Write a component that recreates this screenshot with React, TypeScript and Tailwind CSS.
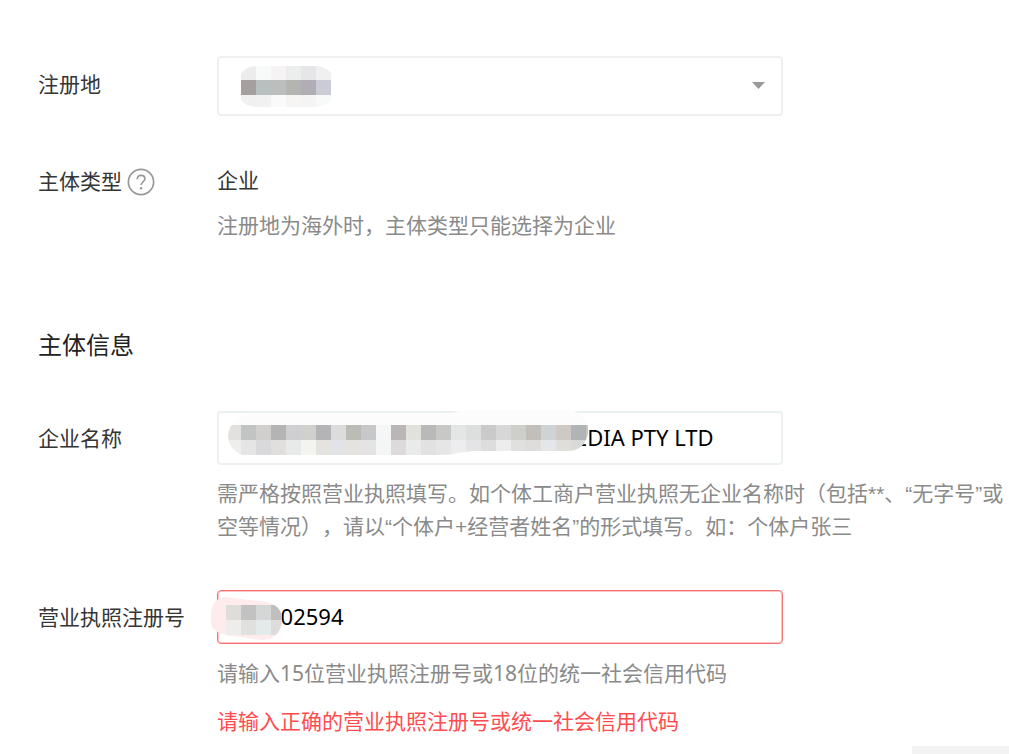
import { useState, type ReactNode } from "react";

type Row = { y: number; h: number; colors: string[] };

function Tiles({ x, rows, first = 15 }: { x: number; rows: Row[]; first?: number }) {
  return (
    <>
      {rows.map((row) =>
        row.colors.map((color, i) => (
          <rect
            key={`${row.y}-${i}`}
            x={i === 0 ? x : x + first + (i - 1) * 15}
            y={row.y}
            width={i === 0 ? first : 15}
            height={row.h}
            fill={color}
            shapeRendering="crispEdges"
          />
        )),
      )}
    </>
  );
}

function RegionMask() {
  return (
    <svg className="pointer-events-none absolute top-[10px] left-6" width="90" height="41" viewBox="0 0 90 41" aria-hidden="true">
      <clipPath id="region-mask">
        <path d="M0 8Q5 0 18 0H75Q86 1 90 7V34Q85 41 74 41H18Q5 41 0 34Z" />
      </clipPath>
      <g clipPath="url(#region-mask)">
        <Tiles
          x={0}
          rows={[
            { y: 0, h: 14, colors: ["#ececec", "#f8f9f9", "#f5f3f4", "#eceded", "#e6e6e8", "#f0f0f0"] },
            { y: 14, h: 15, colors: ["#a59fa0", "#b8bfbf", "#bcbdbd", "#b4b4b0", "#b0adb4", "#cbcbd5"] },
            { y: 29, h: 12, colors: ["#f0f0f0", "#f1f1f1", "#fafafa", "#f6f5f4", "#f4f4f4", "#f8fafa"] },
          ]}
        />
      </g>
    </svg>
  );
}

function NameMask() {
  return (
    <svg className="pointer-events-none absolute -top-px left-[11px]" width="360" height="46" viewBox="0 0 360 46" aria-hidden="true">
      <clipPath id="name-mask">
        <path d="M22 5H205Q222 4 236 0H340Q353 1 360 15V24Q356 40 341 41H246Q233 42 226 44Q219 45 210 45H14Q0 38 0 26Q1 9 22 5Z" />
      </clipPath>
      <g clipPath="url(#name-mask)">
        <rect width="360" height="46" fill="#fcfcfc" />
        <Tiles
          x={0}
          first={13}
          rows={[
            {
              y: 15,
              h: 15,
              colors: [
                "#e2e1e0", "#c2c4c3", "#d0cfcd", "#b4b4b4", "#cfcfd2", "#d0d0cc", "#b4b4b6", "#dcdcdd",
                "#bbbcb5", "#c8c8cb", "#f5f6f6", "#bab6b8", "#e1e2dc", "#b9b9b9", "#c8c8c6", "#e3e6e5",
                "#dcdfdd", "#cacaca", "#d7d7d7", "#cecfcb", "#c2bfba", "#cfd3d4", "#cdcac6", "#b0b4b5", "#c4c6c6",
              ],
            },
            {
              y: 30,
              h: 15,
              colors: [
                "#eeeeec", "#e5e5e5", "#d9d9dc", "#e0dfde", "#e8eaea", "#f3f3ef", "#e5e3df", "#e1e3e6",
                "#e4e3e0", "#e4e4e4", "#f4f5f5", "#dddadb", "#e8ebea", "#e1e1e1", "#e6e6e6", "#ededef",
                "#e4e4e6", "#dddddd", "#ededed", "#e0e1de", "#dedddb", "#e4e7ea", "#dfdedb", "#d9d9d9", "#dddddd",
              ],
            },
          ]}
        />
      </g>
    </svg>
  );
}

function LicenseMask() {
  return (
    <svg className="pointer-events-none absolute top-[7px] -left-[6px]" width="71" height="44" viewBox="0 0 71 44" aria-hidden="true">
      <clipPath id="license-mask">
        <path d="M0 14Q3 1 14 0L47 4Q69 5 71 20V25Q68 43 50 43L15 38Q1 35 0 26Z" />
      </clipPath>
      <g clipPath="url(#license-mask)">
        <rect width="71" height="44" fill="#fdeceb" />
        <Tiles
          x={15}
          rows={[
            { y: 8, h: 15, colors: ["#deddda", "#c2c2c2", "#d5d7d6", "#c0bfbd"] },
            { y: 23, h: 15, colors: ["#ededeb", "#e0e0df", "#e4e9ea", "#dedbdd"] },
          ]}
        />
      </g>
    </svg>
  );
}

function HelpIcon() {
  return (
    <svg width="28" height="28" viewBox="0 0 28 28" fill="none" stroke="#999" aria-hidden="true">
      <circle cx="14" cy="14" r="12.6" strokeWidth="1.7" />
      <path d="M10.3 11.3c0-2.5 1.5-4 3.8-4s3.8 1.4 3.8 3.5c0 3-3.8 3.2-3.8 6.3" strokeWidth="1.7" />
      <circle cx="14.1" cy="20.3" r="1.2" fill="#999" stroke="none" />
    </svg>
  );
}

function Field({ label, children }: { label: ReactNode; children: ReactNode }) {
  return (
    <div className="grid grid-cols-[179px_minmax(0,1fr)]">
      <div className="text-[#353535]">{label}</div>
      <div>{children}</div>
    </div>
  );
}

export default function App() {
  const [name, setName] = useState("EDIA PTY LTD");
  const [license, setLicense] = useState("002594");

  return (
    <main
      lang="zh-CN"
      className="bg-white pt-14 pl-[38px] font-['Noto_Sans','Noto_Sans_CJK_SC',sans-serif] text-[21px] leading-[33px] text-[#8a8a8a] [text-spacing-trim:space-all]"
    >
      <form onSubmit={(e) => e.preventDefault()}>
        <Field label={<label htmlFor="region" className="flex h-14 items-center">注册地</label>}>
          <div className="relative max-w-[566px]">
            <select id="region" className="block h-[60px] w-full appearance-none rounded-[4px] border-2 border-[#f0f0f0] bg-white px-6 text-black outline-none">
              <option value=""></option>
            </select>
            <RegionMask />
            <svg className="pointer-events-none absolute top-[26px] right-[18px]" width="13" height="7" viewBox="0 0 13 7" aria-hidden="true">
              <path d="M0 0H13L6.5 7Z" fill="#999" />
            </svg>
          </div>
        </Field>

        <div className="mt-12">
          <Field
            label={
              <div className="flex items-center gap-[5px] pt-px">
                主体类型
                <button type="button" aria-label="主体类型">
                  <HelpIcon />
                </button>
              </div>
            }
          >
            <p className="text-[#353535]">企业</p>
            <p className="mt-3">注册地为海外时，主体类型只能选择为企业</p>
          </Field>
        </div>

        <h2 className="mt-[86px] text-2xl leading-[33px] text-[#222]">主体信息</h2>

        <div className="mt-[50px]">
          <Field label={<label htmlFor="company" className="flex h-[54px] items-center">企业名称</label>}>
            <div className="relative max-w-[566px]">
              <input
                id="company"
                value={name}
                onChange={(e) => setName(e.target.value)}
                className="block h-[54px] w-full rounded-[4px] border-2 border-[#ebf0f0] bg-white pr-3 pb-[3px] pl-[356px] text-[22px] text-black outline-none"
              />
              <NameMask />
            </div>
            <p className="mt-3 font-['Liberation_Sans','Noto_Sans_CJK_SC',sans-serif]">
              需严格按照营业执照填写。如个体工商户营业执照无企业名称时（包括**、“无字号”或空等情况），请以“个体户+经营者姓名”的形式填写。如：个体户张三
            </p>
          </Field>
        </div>

        <div className="mt-[47px]">
          <Field label={<label htmlFor="license" className="flex h-[54px] items-center">营业执照注册号</label>}>
            <div className="relative max-w-[566px]">
              <input
                id="license"
                value={license}
                onChange={(e) => setLicense(e.target.value)}
                aria-invalid="true"
                aria-describedby="license-error"
                className="block h-[54px] w-full rounded-[4px] border border-[#f87272] bg-white pr-3 pb-[3px] pl-[50px] text-[22px] text-black shadow-[inset_0_0_0_1px_#fcc4c4] outline-none"
              />
              <LicenseMask />
            </div>
            <p className="mt-[13px]">请输入15位营业执照注册号或18位的统一社会信用代码</p>
            <p id="license-error" className="mt-[15px] text-[#ff4d4f]">
              请输入正确的营业执照注册号或统一社会信用代码
            </p>
          </Field>
        </div>
      </form>
      <div className="mt-2 ml-auto h-2 w-[97px] bg-[#f3f3f3]" />
    </main>
  );
}
